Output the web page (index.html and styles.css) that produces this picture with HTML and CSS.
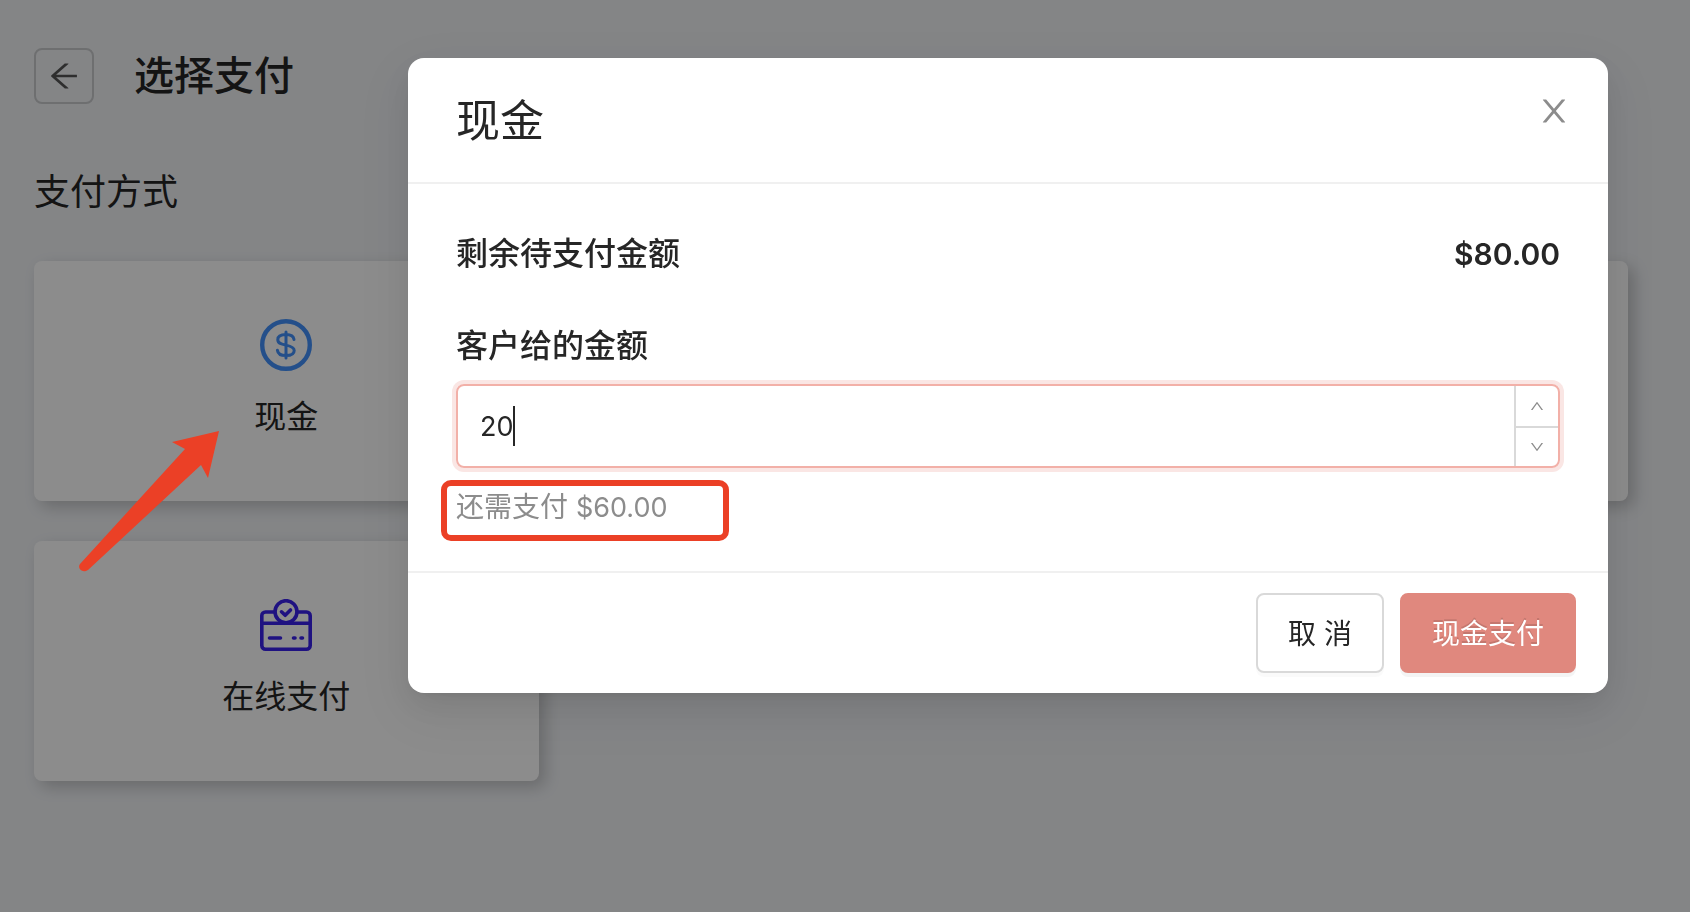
FILE: index.html
```html
<!DOCTYPE html>
<html lang="zh-CN">

<head>
    <meta charset="UTF-8">
    <meta name="viewport" content="width=device-width, initial-scale=1.0">
    <title>选择支付</title>
    <link rel="stylesheet" href="styles.css">
</head>

<body>
    <main class="page">
        <header class="page-header">
            <button type="button" class="back-btn" aria-label="返回">
                <svg class="icon-lg" viewBox="0 0 1024 1024">
                    <path d="M872 474H286.9l350.2-304c5.6-4.9 2.2-14-5.2-14h-88.5c-3.9 0-7.6 1.4-10.5 3.9L155 487.8a31.96 31.96 0 000 48.3L535.1 866c1.5 1.3 3.3 2 5.2 2h91.5c7.4 0 10.8-9.2 5.2-14L286.9 550H872c4.4 0 8-3.6 8-8v-60c0-4.4-3.6-8-8-8z" />
                </svg>
            </button>
            <h1>选择支付</h1>
        </header>
        <h2 class="section-title">支付方式</h2>
        <div class="methods">
            <button type="button" class="method">
                <svg class="method-icon cash" viewBox="0 0 52 52">
                    <circle cx="26" cy="26" r="23.8" stroke-width="4.4" />
                    <path d="M34 20.5C33.5 17 30.5 15.6 26 15.6C21 15.6 17.8 17.5 17.8 20.7C17.8 24.5 21.5 25.2 26 26.1C31 27.1 34.2 28.2 34.2 31.5C34.2 35 31 36.6 26 36.6C21 36.6 17.9 35 17.4 31.2M26 13V39" stroke-width="3" />
                </svg>
                <span>现金</span>
            </button>
            <div class="method"></div>
            <div class="method"></div>
            <button type="button" class="method">
                <svg class="method-icon online" viewBox="0 0 52 52">
                    <circle cx="26" cy="12.7" r="11" />
                    <path d="M15 13H5.5A3.7 3.7 0 0 0 1.8 16.7V46.5A3.7 3.7 0 0 0 5.5 50.2H46.5A3.7 3.7 0 0 0 50.2 46.5V16.7A3.7 3.7 0 0 0 46.5 13H37M2 24.2H50" />
                    <path d="M21.5 12.8L25.2 16.3L30.5 11" />
                    <path d="M9.5 39H20.5M33.5 39H35M41 39H42.5" />
                </svg>
                <span>在线支付</span>
            </button>
        </div>
    </main>

    <div class="mask">
        <section class="modal" role="dialog" aria-modal="true" aria-labelledby="modal-title">
            <header class="modal-header">
                <h2 id="modal-title">现金</h2>
                <button type="button" class="close-btn" aria-label="关闭">
                    <svg class="icon-lg" viewBox="0 0 1024 1024">
                        <path d="M563.8 512l262.5-312.9c4.4-5.2.7-13.1-6.1-13.1h-79.8c-4.7 0-9.2 2.1-12.3 5.7L511.6 449.8 295.1 191.7c-3-3.6-7.5-5.7-12.3-5.7H203c-6.8 0-10.5 7.9-6.1 13.1L459.4 512 196.9 824.9A7.95 7.95 0 00203 838h79.8c4.7 0 9.2-2.1 12.3-5.7l216.5-258.1 216.5 258.1c3 3.6 7.5 5.7 12.3 5.7h79.8c6.8 0 10.5-7.9 6.1-13.1L563.8 512z" />
                    </svg>
                </button>
            </header>
            <div class="modal-body">
                <div class="total">
                    <span>剩余待支付金额</span>
                    <span class="total-price">$80.00</span>
                </div>
                <label class="field-label" for="amount">客户给的金额</label>
                <div class="number-box">
                    <input id="amount" type="text" inputmode="decimal" value="20">
                    <span class="caret"></span>
                    <div class="steps">
                        <button type="button" aria-label="增加">
                            <svg class="icon-sm up" viewBox="0 0 1024 1024">
                                <path d="M884 256h-75c-5.1 0-9.9 2.5-12.9 6.6L512 654.2 227.9 262.6c-3-4.1-7.8-6.6-12.9-6.6h-75c-6.5 0-10.3 7.4-6.5 12.7l352.6 486.1c12.8 17.6 39 17.6 51.7 0l352.6-486.1c3.9-5.3.1-12.7-6.4-12.7z" />
                            </svg>
                        </button>
                        <button type="button" aria-label="减少">
                            <svg class="icon-sm" viewBox="0 0 1024 1024">
                                <path d="M884 256h-75c-5.1 0-9.9 2.5-12.9 6.6L512 654.2 227.9 262.6c-3-4.1-7.8-6.6-12.9-6.6h-75c-6.5 0-10.3 7.4-6.5 12.7l352.6 486.1c12.8 17.6 39 17.6 51.7 0l352.6-486.1c3.9-5.3.1-12.7-6.4-12.7z" />
                            </svg>
                        </button>
                    </div>
                </div>
                <p class="hint">还需支付 <span class="hint-price">$60.00</span><span class="hint-mark"></span></p>
            </div>
            <footer class="modal-footer">
                <button type="button" class="btn">取 消</button>
                <button type="button" class="btn btn-primary">现金支付</button>
            </footer>
        </section>
    </div>

    <svg class="pointer" viewBox="0 0 142 144">
        <path d="M141 1L94 12L107 19L2 134C-1 138 4 144 10 140L123 35L130 48Z" />
    </svg>
</body>

</html>
```
FILE: styles.css
```css
* {
    box-sizing: border-box;
}

body {
    margin: 0;
    min-height: 100vh;
    background-color: #f0f2f5;
    color: #262626;
    font-family: Inter, "Noto Sans CJK SC", sans-serif;
    font-size: 28px;
}

h1,
h2,
p {
    margin: 0;
}

button,
input {
    font: inherit;
    color: inherit;
}

button {
    padding: 0;
    border: 0;
    background: none;
    cursor: pointer;
}

svg {
    display: block;
    fill: currentColor;
}

.icon-lg {
    width: 36px;
    height: 36px;
}

.icon-sm {
    width: 16px;
    height: 16px;
}

/* page */

.page {
    padding: 48px 62px 48px 34px;
}

.page-header {
    display: flex;
    align-items: center;
    gap: 40px;
    height: 56px;
}

.back-btn {
    display: flex;
    align-items: center;
    justify-content: center;
    width: 60px;
    height: 56px;
    border: 2px solid #c8cacc;
    border-radius: 8px;
    color: #555;
}

.page-header h1 {
    font-size: 40px;
    font-weight: 500;
    line-height: 56px;
}

.section-title {
    margin-top: 60px;
    font-size: 36px;
    font-weight: 400;
    line-height: 57px;
}

.methods {
    display: grid;
    grid-template-columns: repeat(3, 1fr);
    grid-auto-rows: 240px;
    gap: 40px;
    margin-top: 40px;
}

.method {
    display: flex;
    flex-direction: column;
    align-items: center;
    justify-content: center;
    gap: 20px;
    border-radius: 8px;
    background-color: #fff;
    box-shadow: 6px 6px 16px rgba(0, 0, 0, 0.2);
    font-size: 32px;
    line-height: 52px;
}

.method-icon {
    width: 52px;
    height: 52px;
    fill: none;
    stroke: currentColor;
    stroke-width: 3.6;
    stroke-linecap: round;
    stroke-linejoin: round;
}

.cash {
    color: #4291fb;
}

.online {
    color: #3a21ec;
}

/* modal */

.mask {
    position: fixed;
    inset: 0;
    display: flex;
    align-items: flex-start;
    justify-content: flex-end;
    padding: 58px 82px;
    background-color: rgba(0, 0, 0, 0.45);
}

.modal {
    width: 100%;
    max-width: 1200px;
    border-radius: 16px;
    background-color: #fff;
    box-shadow: 0 6px 12px -8px rgba(0, 0, 0, 0.12), 0 12px 32px rgba(0, 0, 0, 0.08), 0 18px 56px 16px rgba(0, 0, 0, 0.05);
}

.modal-header {
    display: flex;
    align-items: flex-start;
    justify-content: space-between;
    padding: 28px 36px 26px 48px;
    border-bottom: 2px solid #f0f0f0;
}

.modal-header h2 {
    font-size: 44px;
    font-weight: 400;
    line-height: 70px;
}

.close-btn {
    padding: 7px 0;
    color: #8c8c8c;
}

.modal-body {
    padding: 44px 48px 40px;
}

.total {
    display: flex;
    justify-content: space-between;
    font-size: 32px;
    font-weight: 500;
    line-height: 52px;
}

.total-price {
    font-size: 30px;
    font-weight: 600;
}

.field-label {
    display: block;
    margin: 40px 0 12px;
    font-size: 32px;
    font-weight: 500;
    line-height: 52px;
}

.number-box {
    position: relative;
    display: flex;
    height: 84px;
    border: 2px solid #f2b0a8;
    border-radius: 8px;
    box-shadow: 0 0 0 4px #fae6e4;
}

.number-box input {
    flex: 1;
    min-width: 0;
    padding: 0 22px;
    border: 0;
    outline: 0;
    background: none;
    font-size: 27px;
}

.caret {
    position: absolute;
    left: 55px;
    top: 20px;
    width: 2px;
    height: 40px;
    background-color: #262626;
}

.steps {
    display: flex;
    flex-direction: column;
    width: 44px;
    border-left: 2px solid #d9d9d9;
}

.steps button {
    display: flex;
    height: 50%;
    align-items: center;
    justify-content: center;
    color: #8c8c8c;
}

.steps button + button {
    border-top: 2px solid #d9d9d9;
}

.up {
    transform: rotate(180deg);
}

.hint {
    position: relative;
    margin-top: 16px;
    color: #8c8c8c;
    line-height: 46px;
}

.hint-price {
    font-size: 27px;
}

.hint-mark {
    position: absolute;
    left: -15px;
    top: -4px;
    width: 288px;
    height: 61px;
    border: 6px solid #eb4026;
    border-radius: 10px;
}

.modal-footer {
    display: flex;
    justify-content: flex-end;
    gap: 16px;
    padding: 20px 32px;
    border-top: 2px solid #f0f0f0;
}

.btn {
    height: 80px;
    padding: 0 30px 2px;
    border: 2px solid #d9d9d9;
    border-radius: 8px;
    background-color: #fff;
    box-shadow: 0 4px 0 rgba(0, 0, 0, 0.02);
}

.btn-primary {
    border-color: #e0887e;
    background-color: #e0887e;
    box-shadow: 0 4px 0 rgba(0, 0, 0, 0.045);
    color: #fff;
    text-shadow: 0 -2px 0 rgba(0, 0, 0, 0.12);
}

/* arrow over the cash card */

.pointer {
    position: absolute;
    left: 78px;
    top: 430px;
    width: 142px;
    height: 144px;
    fill: #eb4026;
    pointer-events: none;
}
```
